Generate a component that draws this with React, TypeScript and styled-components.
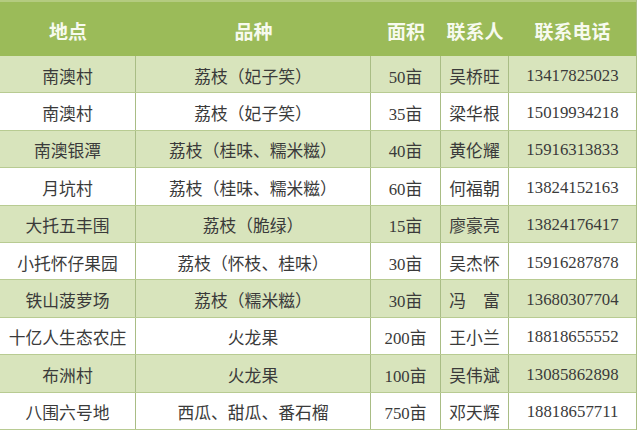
import styled, { createGlobalStyle } from "styled-components"

const GlobalStyle = createGlobalStyle`
    html, body {
        margin: 0;
        padding: 0;
        background: #ffffff;
    }
`

const rows = [
    ["南澳村", "荔枝（妃子笑）", "50亩", "吴桥旺", "13417825023"],
    ["南澳村", "荔枝（妃子笑）", "35亩", "梁华根", "15019934218"],
    ["南澳银潭", "荔枝（桂味、糯米糍）", "40亩", "黄伦耀", "15916313833"],
    ["月坑村", "荔枝（桂味、糯米糍）", "60亩", "何福朝", "13824152163"],
    ["大托五丰围", "荔枝（脆绿）", "15亩", "廖豪亮", "13824176417"],
    ["小托怀仔果园", "荔枝（怀枝、桂味）", "30亩", "吴杰怀", "15916287878"],
    ["铁山菠萝场", "荔枝（糯米糍）", "30亩", "冯　富", "13680307704"],
    ["十亿人生态农庄", "火龙果", "200亩", "王小兰", "18818655552"],
    ["布洲村", "火龙果", "100亩", "吴伟斌", "13085862898"],
    ["八围六号地", "西瓜、甜瓜、番石榴", "750亩", "邓天辉", "18818657711"],
]

const headers = ["地点", "品种", "面积", "联系人", "联系电话"]

function App() {
    return (
        <>
            <GlobalStyle />
            <Page>
                <Table>
                    <HeaderRow>
                        {headers.map((h) => (
                            <HeaderCell key={h}>{h}</HeaderCell>
                        ))}
                    </HeaderRow>
                    {rows.map((r, i) => (
                        <Row key={i} $shaded={i % 2 === 0}>
                            {r.map((c, j) => (
                                <Cell key={j}>{c}</Cell>
                            ))}
                        </Row>
                    ))}
                </Table>
            </Page>
        </>
    )
}

const Page = styled.div`
    width: 640px;
    height: 431px;
    overflow: hidden;
    background: #ffffff;
`

const Table = styled.div`
    width: 637px;
    display: grid;
    grid-template-rows: 56px repeat(10, 37.4px);
    border-right: 1px solid #a9bd85;
    box-sizing: border-box;
`

const HeaderRow = styled.div`
    display: grid;
    grid-template-columns: 136px 235px 70px 68px 1fr;
    background: #9bbb59;
    border-top: 2px solid #b4cb80;
    box-sizing: border-box;
`

const HeaderCell = styled.div`
    display: flex;
    align-items: center;
    justify-content: center;
    padding-top: 2px;
    color: #f7faef;
    font-family: "Noto Sans CJK SC", sans-serif;
    font-size: 19px;
    font-weight: 700;
`

const Row = styled.div<{ $shaded: boolean }>`
    display: grid;
    grid-template-columns: 136px 235px 70px 68px 1fr;
    background: ${(p) => (p.$shaded ? "#d8e4bc" : "#ffffff")};
    border-bottom: 1px solid #b8cb92;
    box-sizing: border-box;
`

const Cell = styled.div`
    display: flex;
    align-items: center;
    justify-content: center;
    padding-top: 3px;
    border-right: 1px solid #a9bd85;
    color: #3a3a3a;
    font-family: "Liberation Serif", "Noto Sans CJK SC", serif;
    font-size: 16.8px;
    white-space: nowrap;

    &:last-child {
        border-right: none;
    }
`

export default App
